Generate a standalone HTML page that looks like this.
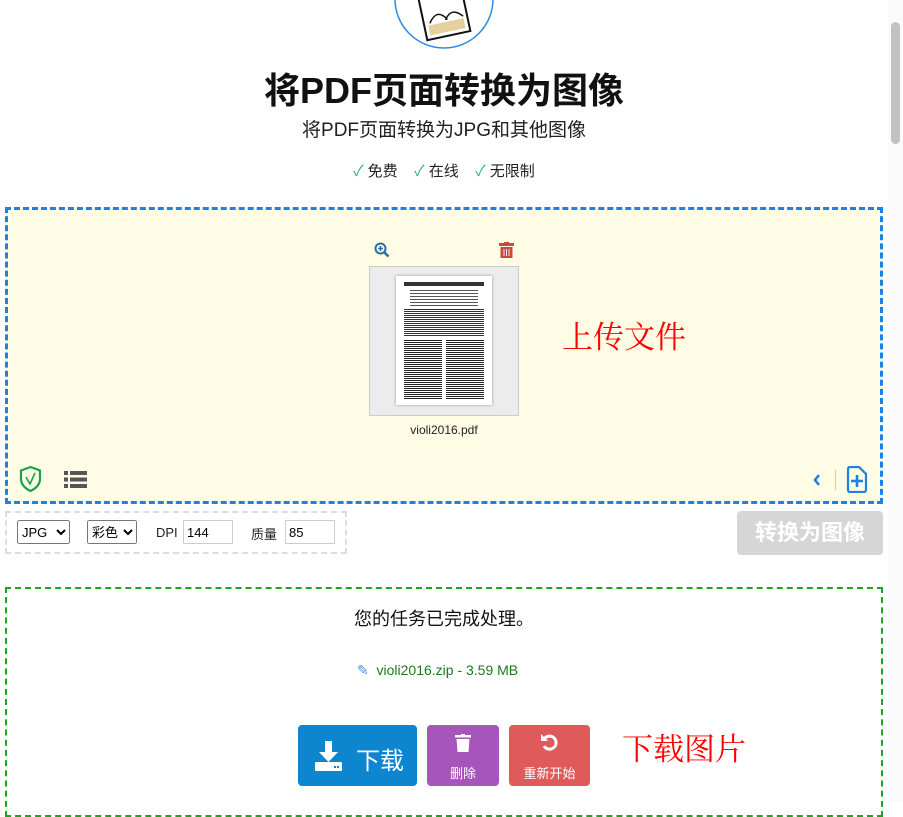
<!DOCTYPE html>
<html><head><meta charset="utf-8"><style>
*{box-sizing:border-box;margin:0;padding:0}
body{width:903px;height:801px;overflow:hidden;background:#fff;font-family:"Liberation Sans","Noto Sans CJK SC",sans-serif;position:relative;color:#222}
.abs{position:absolute}
.sb{position:absolute;left:888px;top:0;width:15px;height:801px;background:#fafafa}
.sb div{position:absolute;left:3px;top:22px;width:9px;height:122px;background:#c1c1c1;border-radius:5px}
.cn{font-family:"Liberation Sans","Noto Sans CJK SC",sans-serif}
.btn{position:absolute;border-radius:4px;color:#fff;text-align:center}
select,input{font-size:13px}
</style></head><body>
<div class="sb"><div></div></div>
<svg class="abs" style="left:393px;top:-52px" width="102" height="102"><circle cx="51" cy="51" r="49" fill="#fff" stroke="#2a8de0" stroke-width="1.5"/><g transform="rotate(-12 51 60)"><rect x="28" y="30" width="44" height="58" fill="#fff" stroke="#111" stroke-width="2"/><rect x="32" y="74" width="36" height="10" fill="#e5cf9d"/><path d="M34 72 Q44 58 52 72 M50 72 Q58 60 68 72" fill="none" stroke="#111" stroke-width="1.5"/></g></svg>
<div class="abs cn" style="left:0;width:888px;top:62px;text-align:center;font-size:36px;font-weight:bold;color:#111">将PDF页面转换为图像</div>
<div class="abs cn" style="left:0;width:888px;top:115px;text-align:center;font-size:19px;color:#222">将PDF页面转换为JPG和其他图像</div>
<div class="abs cn" style="left:0;width:888px;top:160px;text-align:center;font-size:15px;color:#222;word-spacing:0"><span style="color:#2bb673">✓</span> 免费 &nbsp;&nbsp; <span style="color:#2bb673">✓</span> 在线 &nbsp;&nbsp; <span style="color:#2bb673">✓</span> 无限制</div>

<div class="abs" style="left:5px;top:207px;width:878px;height:297px;background:#fefce5;border:3px dashed #1a82e2"></div>
<svg class="abs" style="left:374px;top:242px" width="16" height="16"><circle cx="6.5" cy="6.5" r="5" fill="none" stroke="#2a6da8" stroke-width="2"/><path d="M6.5 4v5M4 6.5h5" stroke="#2a6da8" stroke-width="1.6"/><path d="M10 10l4.5 4.5" stroke="#2a6da8" stroke-width="2.5"/></svg>
<svg class="abs" style="left:499px;top:242px" width="15" height="16"><rect x="0" y="1" width="15" height="3" fill="#c9483f"/><rect x="5" y="0" width="5" height="2" fill="#c9483f"/><rect x="1.5" y="5" width="12" height="11" fill="#c9483f"/><path d="M5 7v7M7.5 7v7M10 7v7" stroke="#fde" stroke-width="1"/></svg>
<div class="abs" style="left:369px;top:266px;width:150px;height:150px;background:#ececec;border:1px solid #ccc"></div>
<div class="abs" style="left:396px;top:276px;width:96px;height:129px;background:#fff;box-shadow:0 0 3px #999;padding:6px 8px">
<div style="height:4px;background:#333;margin-bottom:4px"></div>
<div style="height:16px;background:repeating-linear-gradient(#555 0 1px,#fff 1px 3px);margin:0 6px 3px"></div>
<div style="height:28px;background:repeating-linear-gradient(#333 0 1px,#fff 1px 2px)"></div>
<div style="display:flex;gap:4px;margin-top:3px"><div style="flex:1;height:60px;background:repeating-linear-gradient(#222 0 1px,#fff 1px 2px)"></div><div style="flex:1;height:60px;background:repeating-linear-gradient(#222 0 1px,#fff 1px 2px)"></div></div>
</div>
<div class="abs" style="left:369px;top:423px;width:150px;text-align:center;font-size:12px;color:#222">violi2016.pdf</div>
<div class="abs" style="left:562px;top:312px;font-size:31px;color:#f00;font-family:'Noto Serif CJK SC',serif">上传文件</div>
<svg class="abs" style="left:19px;top:465px" width="23" height="28"><path d="M11.5 2L21 5.5V14C21 20 16 24 11.5 26C7 24 2 20 2 14V5.5Z" fill="none" stroke="#1aa14f" stroke-width="2.2"/><path d="M7 12l4 7 5-11" fill="none" stroke="#1aa14f" stroke-width="1.6"/></svg>
<svg class="abs" style="left:64px;top:471px" width="23" height="17" fill="#555"><rect x="0" y="0" width="4" height="4"/><rect x="6" y="0" width="17" height="4"/><rect x="0" y="6.5" width="4" height="4"/><rect x="6" y="6.5" width="17" height="4"/><rect x="0" y="13" width="4" height="4"/><rect x="6" y="13" width="17" height="4"/></svg>
<svg class="abs" style="left:812px;top:473px" width="10" height="14"><path d="M7 2L3 7l4 5" fill="none" stroke="#1a82e2" stroke-width="2.5"/></svg>
<div class="abs" style="left:835px;top:470px;width:1px;height:20px;background:#ccc"></div>
<svg class="abs" style="left:846px;top:466px" width="22" height="27"><path d="M2 3a2 2 0 0 1 2-2h9l7 7v16a2 2 0 0 1-2 2H4a2 2 0 0 1-2-2Z" fill="none" stroke="#1a82e2" stroke-width="2.2"/><path d="M11 9v12M5 15h12" stroke="#1a82e2" stroke-width="2.6"/></svg>

<div class="abs" style="left:5px;top:511px;width:342px;height:43px;border:2px dashed #ddd"></div>
<select class="abs" style="left:17px;top:520px;width:53px;height:24px"><option>JPG</option></select>
<select class="abs" style="left:87px;top:520px;width:50px;height:24px"><option>彩色</option></select>
<div class="abs" style="left:156px;top:525px;font-size:13px">DPI</div>
<input class="abs" style="left:183px;top:520px;width:50px;height:24px;border:1px solid #ccc;padding-left:3px" value="144">
<div class="abs" style="left:251px;top:524px;font-size:13px">质量</div>
<input class="abs" style="left:285px;top:520px;width:50px;height:24px;border:1px solid #ccc;padding-left:3px" value="85">
<div class="btn" style="left:737px;top:511px;width:146px;height:44px;background:#d6d6d6;font-size:22px;font-weight:bold;line-height:44px">转换为图像</div>

<div class="abs" style="left:5px;top:587px;width:878px;height:230px;border:2px dashed #1aa81a"></div>
<div class="abs" style="left:5px;top:605px;width:878px;text-align:center;font-size:18px;color:#111">您的任务已完成处理。</div>
<div class="abs" style="left:357px;top:662px;font-size:14px;color:#1a7a1a"><span style="color:#4a8fd8">✎</span>&nbsp; violi2016.zip - 3.59 MB</div>
<div class="btn" style="left:298px;top:725px;width:119px;height:61px;background:#0e85cf">
<svg class="abs" style="left:17px;top:16px" width="27" height="30" fill="#fff"><path d="M10 0h7v11h6L13.5 21 4 11h6z"/><rect x="0" y="21" width="27" height="9" rx="1"/><rect x="19" y="25" width="2" height="2" fill="#0e85cf"/><rect x="22" y="25" width="2" height="2" fill="#0e85cf"/></svg>
<div class="abs" style="left:58px;top:16px;font-size:24px">下载</div></div>
<div class="btn" style="left:427px;top:725px;width:72px;height:61px;background:#a656ba">
<svg class="abs" style="left:28px;top:9px" width="16" height="18" fill="#fff"><rect x="0" y="1" width="16" height="2.5"/><rect x="6" y="0" width="4" height="2"/><path d="M1.5 5h13l-1 13h-11z"/></svg>
<div class="abs" style="left:0;width:72px;top:38px;font-size:13px">删除</div></div>
<div class="btn" style="left:509px;top:725px;width:81px;height:61px;background:#df5a5a">
<svg class="abs" style="left:31px;top:8px" width="19" height="19"><path d="M5 5A6.5 6.5 0 1 1 4 13" fill="none" stroke="#fff" stroke-width="3"/><path d="M1 1v7h7z" fill="#fff"/></svg>
<div class="abs" style="left:0;width:81px;top:38px;font-size:13px">重新开始</div></div>
<div class="abs" style="left:622px;top:724px;font-size:31px;color:#f00;font-family:'Noto Serif CJK SC',serif">下载图片</div>
</body></html>
